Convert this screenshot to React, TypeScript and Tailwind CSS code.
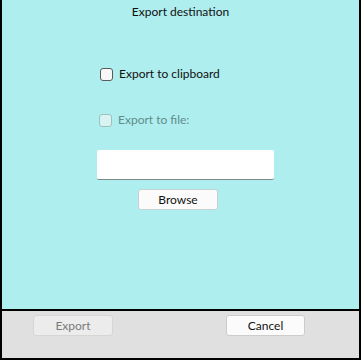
import React from "react";

const font = { fontFamily: 'Lato, "Noto Sans", sans-serif' };

function Check({ label, disabled }: { label: string; disabled?: boolean }) {
  return (
    <div className="flex items-center h-[16px]">
      <span
        className={
          "w-[13px] h-[13px] rounded-[3px] border box-border " +
          (disabled ? "border-[#9fbfbf] bg-[#d9f3f3]" : "border-[#5a5a5a] bg-[#f7f7f7]")
        }
      />
      <span className={"ml-[6px] text-[12px] leading-[16px] " + (disabled ? "text-[#5f8c8c]" : "text-[#111]")}>
        {label}
      </span>
    </div>
  );
}

export default function App() {
  return (
    <div className="w-[361px] h-[360px] flex flex-col border-l-2 border-r-2 border-b-2 border-black box-border bg-[#e0e0e0]" style={font}>
      <div className="h-[311px] bg-[#afeeee] border-b-2 border-black box-border flex flex-col">
        <div className="pt-[4px] text-center text-[12px] leading-[16px] text-[#111]">Export destination</div>
        <div className="ml-[98px] mt-[46px]">
          <Check label="Export to clipboard" />
        </div>
        <div className="ml-[97px] mt-[30px]">
          <Check label="Export to file:" disabled />
        </div>
        <div className="ml-[95px] mt-[22px] w-[177px] h-[30px] bg-white rounded-[2px] border-b border-[#7a8a8a] box-border" />
        <button className="ml-[136px] mt-[9px] w-[80px] h-[21px] bg-[#fbfbfb] border border-[#c4d2d2] rounded-[3px] text-[12px] leading-[18px] text-[#111]">
          Browse
        </button>
      </div>
      <div className="flex items-start pt-[4px]">
        <button className="ml-[31px] w-[80px] h-[21px] bg-[#ececec] border border-[#d6d6d6] rounded-[3px] text-[12px] leading-[18px] text-[#7a7a7a]">
          Export
        </button>
        <button className="ml-[113px] w-[79px] h-[21px] bg-[#fbfbfb] border border-[#cccccc] rounded-[3px] text-[12px] leading-[18px] text-[#111]">
          Cancel
        </button>
      </div>
    </div>
  );
}
